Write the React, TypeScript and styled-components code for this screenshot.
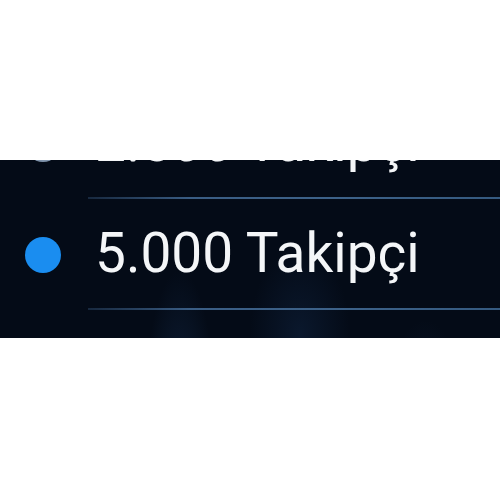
import React from "react";
import styled, { createGlobalStyle } from "styled-components";

const GlobalStyle = createGlobalStyle`
  html, body {
    margin: 0;
    padding: 0;
    background: #ffffff;
  }
`;

const Screen = styled.div`
  margin-top: 160px;
  height: 178px;
  overflow: hidden;
  background:
    radial-gradient(ellipse 35px 140px at 180px 250px, rgba(30, 62, 105, 0.4), transparent),
    radial-gradient(ellipse 45px 130px at 425px 290px, rgba(30, 60, 100, 0.35), transparent),
    radial-gradient(ellipse 50px 90px at 300px 175px, rgba(22, 48, 85, 0.35), transparent),
    radial-gradient(ellipse 40px 90px at 100px 320px, rgba(22, 45, 80, 0.3), transparent),
    #040b17;
`;

const List = styled.ul`
  list-style: none;
  margin: -72px 0 0 0;
  padding: 0;
`;

const Row = styled.li`
  display: flex;
  align-items: center;
  padding-left: 25px;
`;

const Dot = styled.span<{ $active?: boolean }>`
  flex: none;
  width: 36px;
  height: 36px;
  border-radius: 50%;
  background: ${(p) => (p.$active ? "#1a8df0" : "#7f93ab")};
  margin-right: 27px;
`;

const Content = styled.div`
  flex: 1;
  height: 109px;
  display: flex;
  align-items: center;
  padding-left: 7px;
  border-bottom: 2px solid transparent;
  border-image: linear-gradient(
      90deg,
      rgba(60, 95, 135, 0.35) 0%,
      #3a5d84 25%,
      #3d6289 60%,
      #355a80 100%
    )
    1;
`;

const Label = styled.span`
  font-family: Roboto, "Liberation Sans", sans-serif;
  font-size: 55px;
  color: #f4f6f8;
  line-height: 1.17;
  white-space: nowrap;
`;

const options = [
  { label: "2.500 Takipçi", active: false },
  { label: "5.000 Takipçi", active: true },
];

export default function App() {
  return (
    <>
      <GlobalStyle />
      <Screen>
        <List>
          {options.map((o) => (
            <Row key={o.label}>
              <Dot $active={o.active} />
              <Content>
                <Label>{o.label}</Label>
              </Content>
            </Row>
          ))}
        </List>
      </Screen>
    </>
  );
}
